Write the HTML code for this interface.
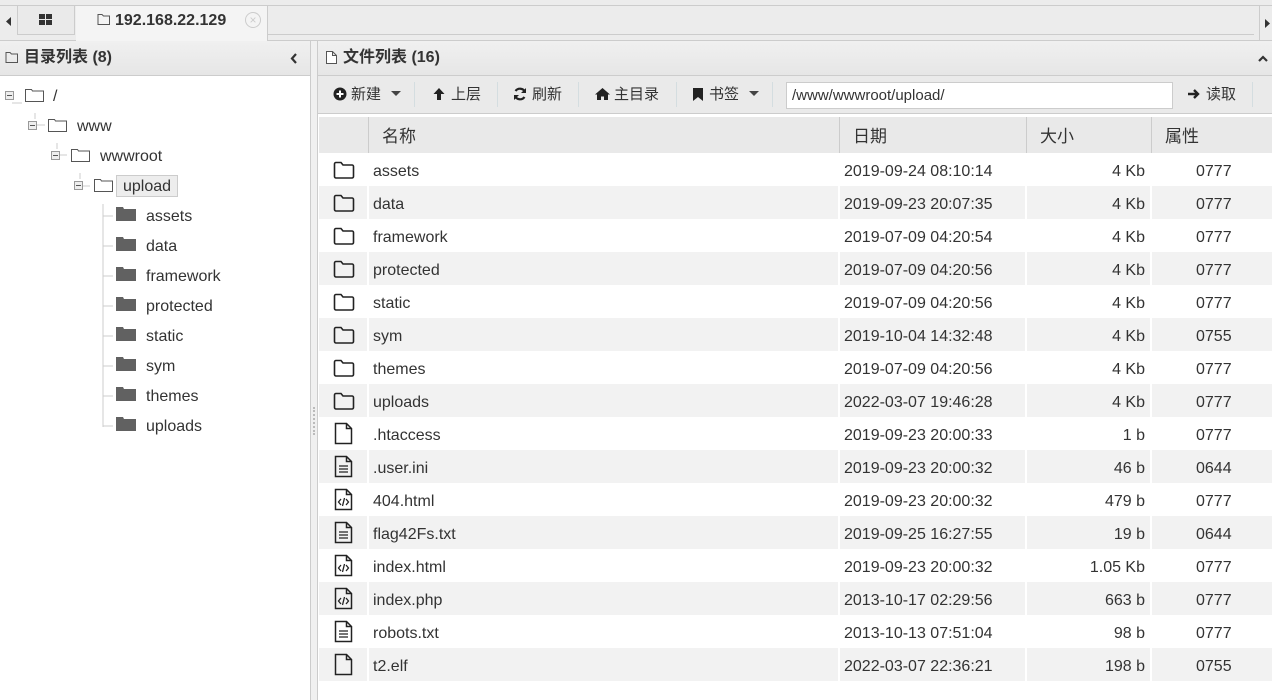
<!DOCTYPE html>
<html><head><meta charset="utf-8"><style>
*{margin:0;padding:0;box-sizing:border-box}
body{width:1272px;height:700px;overflow:hidden;background:#fff;font-family:"Liberation Sans","Noto Sans CJK SC",sans-serif;color:#333;position:relative;line-height:20px}
.abs{position:absolute}
.tabbar{left:0;top:0;width:1272px;height:41px;background:#ececec;border-bottom:1px solid #ccc}
.tabbar .line{left:0;top:5px;width:1272px;height:1px;background:#ccc}
.hdr{background:linear-gradient(#f0f0f0,#e6e6e6);border-bottom:1px solid #ccc;font-weight:bold;font-size:16px;color:#333}
.tree div{position:absolute;font-size:16px;color:#333;white-space:nowrap}
.row{position:absolute;left:319px;width:953px;height:33px;font-size:16px;color:#333}
.row span{position:absolute;top:9px}
.row.alt{background:#f2f2f2}
.sep{position:absolute;top:0;width:2px;height:33px;background:#fff}
.tb{font-size:15px;color:#333;top:85px}
.vs{width:1px;height:25px;background:#d4dde0;top:82px}
</style></head><body>
<div class="abs tabbar">
 <div class="abs line"></div>
 <div class="abs" style="left:0;top:6px;width:18px;height:29px;border-right:1px solid #ccc"></div>
 <svg class="abs" style="left:6px;top:17px" width="6" height="9"><path d="M5 0L0 4.5L5 9Z" fill="#333"/></svg>
 <div class="abs" style="left:18px;top:6px;width:57px;height:29px;background:#eaeaea;border-right:1px solid #ccc;border-bottom:1px solid #ccc"></div>
 <svg class="abs" style="left:39px;top:14px" width="14" height="12"><rect x="0" y="0" width="6" height="5" fill="#333"/><rect x="7" y="0" width="6" height="5" fill="#333"/><rect x="0" y="6" width="6" height="5" fill="#333"/><rect x="7" y="6" width="6" height="5" fill="#333"/></svg>
 <div class="abs" style="left:76px;top:6px;width:192px;height:35px;background:#f4f4f4;border-right:1px solid #ccc"></div>
 <svg class="abs" style="left:97px;top:13px" width="14" height="13"><path d="M1 1.5h4l1.5 1.5h6v8.5h-11.5z" fill="none" stroke="#555"/></svg>
 <div class="abs" style="left:115px;top:11px;font-size:16px;font-weight:bold;color:#333">192.168.22.129</div>
 <div class="abs" style="left:245px;top:12px;width:16px;height:16px;border-radius:50%;border:1px solid #ccc;color:#ccc;font-size:12px;line-height:14px;text-align:center">×</div>
 <div class="abs" style="left:268px;top:6px;width:986px;height:29px;border-bottom:1px solid #ccc"></div>
 <div class="abs" style="left:1259px;top:6px;width:1px;height:34px;background:#ccc"></div>
 <svg class="abs" style="left:1265px;top:19px" width="6" height="9"><path d="M0 0L5 4.5L0 9Z" fill="#333"/></svg>
</div>
<!-- left panel -->
<div class="abs hdr" style="left:0;top:41px;width:310px;height:35px"></div>
<svg class="abs" style="left:5px;top:51px" width="14" height="13"><path d="M1 1.5h4l1.5 1.5h6v8.5h-11.5z" fill="none" stroke="#555"/></svg>
<div class="abs" style="left:24px;top:48px;font-size:16px;font-weight:bold">目录列表 (8)</div>
<svg class="abs" style="left:290px;top:53px" width="8" height="11"><path d="M6 1L2 5.5L6 10" fill="none" stroke="#333" stroke-width="2.2"/></svg>
<div class="abs" style="left:310px;top:41px;width:8px;height:659px;background:#f0f0f0;border-left:1px solid #ccc;border-right:1px solid #ccc"></div>
<div class="abs" style="left:313px;top:407px;width:2px;height:28px;border-left:2px dotted #bbb"></div>
<div class="tree">
 <svg class="abs" style="left:0;top:80px" width="310" height="360">
  <g stroke="#ccc" fill="none">
   <line x1="12" y1="23" x2="22" y2="23"/><line x1="35" y1="33" x2="35" y2="39"/><line x1="35" y1="45" x2="45" y2="45"/>
   <line x1="57" y1="63" x2="57" y2="69"/><line x1="57" y1="75" x2="67" y2="75"/>
   <line x1="80" y1="93" x2="80" y2="99"/><line x1="80" y1="106" x2="90" y2="106"/>
   <line x1="103" y1="124" x2="103" y2="347"/>
  </g>
  <g stroke="#ccc">
   <line x1="103" y1="136" x2="113" y2="136"/><line x1="103" y1="166" x2="113" y2="166"/><line x1="103" y1="196" x2="113" y2="196"/><line x1="103" y1="226" x2="113" y2="226"/><line x1="103" y1="256" x2="113" y2="256"/><line x1="103" y1="286" x2="113" y2="286"/><line x1="103" y1="316" x2="113" y2="316"/><line x1="103" y1="346" x2="113" y2="346"/>
  </g>
  <g fill="#eee" stroke="#999"><rect x="5.5" y="11.5" width="8" height="8"/><rect x="28.5" y="41.5" width="8" height="8"/><rect x="51.5" y="71.5" width="8" height="8"/><rect x="74.5" y="101.5" width="8" height="8"/></g>
  <g stroke="#555"><line x1="7" y1="15.5" x2="12" y2="15.5"/><line x1="30" y1="45.5" x2="35" y2="45.5"/><line x1="53" y1="75.5" x2="58" y2="75.5"/><line x1="76" y1="105.5" x2="81" y2="105.5"/></g>
  <g fill="#fff" stroke="#555">
   <path d="M25.5 9.5h6l1 1.5h11v10.5h-18z"/><path d="M48.5 39.5h6l1 1.5h11v10.5h-18z"/><path d="M71.5 69.5h6l1 1.5h11v10.5h-18z"/><path d="M94.5 99.5h6l1 1.5h11v10.5h-18z"/>
  </g>
  <g fill="#616161">
   <path d="M116 127h7l1 2h12v12h-20z"/><path d="M116 157h7l1 2h12v12h-20z"/><path d="M116 187h7l1 2h12v12h-20z"/><path d="M116 217h7l1 2h12v12h-20z"/><path d="M116 247h7l1 2h12v12h-20z"/><path d="M116 277h7l1 2h12v12h-20z"/><path d="M116 307h7l1 2h12v12h-20z"/><path d="M116 337h7l1 2h12v12h-20z"/>
  </g>
 </svg>
 <div style="left:53px;top:87px">/</div>
 <div style="left:77px;top:117px">www</div>
 <div style="left:100px;top:147px">wwwroot</div>
 <div style="left:116px;top:175px;height:22px;padding:0 6px;line-height:21px;background:#ededed;border:1px solid #ccc">upload</div>
 <div style="left:146px;top:207px">assets</div>
 <div style="left:146px;top:237px">data</div>
 <div style="left:146px;top:267px">framework</div>
 <div style="left:146px;top:297px">protected</div>
 <div style="left:146px;top:327px">static</div>
 <div style="left:146px;top:357px">sym</div>
 <div style="left:146px;top:387px">themes</div>
 <div style="left:146px;top:417px">uploads</div>
</div>
<!-- right panel -->
<div class="abs hdr" style="left:318px;top:41px;width:954px;height:35px"></div>
<svg class="abs" style="left:325px;top:50px" width="13" height="15"><path d="M1.5 1.5h6l4 4v8h-10z M7.5 1.5v4h4" fill="#fff" stroke="#555"/></svg>
<div class="abs" style="left:343px;top:48px;font-size:16px;font-weight:bold">文件列表 (16)</div>
<svg class="abs" style="left:1258px;top:55px" width="10" height="7"><path d="M1 6L5 2L9 6" fill="none" stroke="#333" stroke-width="2.2"/></svg>
<div class="abs" style="left:318px;top:76px;width:954px;height:38px;background:#eaeaea;border-bottom:1px solid #ccc"></div>
<svg class="abs" style="left:333px;top:87px" width="14" height="14"><circle cx="7" cy="7" r="6.5" fill="#222"/><path d="M7 3.5v7M3.5 7h7" stroke="#fff" stroke-width="2"/></svg>
<div class="abs tb" style="left:351px">新建</div>
<svg class="abs" style="left:391px;top:91px" width="10" height="6"><path d="M0 0h10L5 5z" fill="#444"/></svg>
<div class="abs vs" style="left:414px"></div>
<svg class="abs" style="left:432px;top:87px" width="14" height="14"><path d="M7 1L1.5 7h3.5v6h4v-6h3.5z" fill="#222"/></svg>
<div class="abs tb" style="left:451px">上层</div>
<div class="abs vs" style="left:497px"></div>
<svg class="abs" style="left:513px;top:87px" width="14" height="14"><path d="M12 5A5.5 5.5 0 0 0 2.5 4M2 9a5.5 5.5 0 0 0 9.5 1" fill="none" stroke="#222" stroke-width="2.2"/><path d="M13 1v5h-5zM1 13V8h5z" fill="#222"/></svg>
<div class="abs tb" style="left:532px">刷新</div>
<div class="abs vs" style="left:578px"></div>
<svg class="abs" style="left:595px;top:88px" width="15" height="12"><path d="M7.5 0L0 6.5h2v5.5h4v-3.5h3v3.5h4v-5.5h2z" fill="#222"/></svg>
<div class="abs tb" style="left:614px">主目录</div>
<div class="abs vs" style="left:676px"></div>
<svg class="abs" style="left:692px;top:88px" width="12" height="13"><path d="M1 0h10v13l-5-4-5 4z" fill="#222"/></svg>
<div class="abs tb" style="left:709px">书签</div>
<svg class="abs" style="left:749px;top:91px" width="10" height="6"><path d="M0 0h10L5 5z" fill="#444"/></svg>
<div class="abs vs" style="left:772px"></div>
<div class="abs" style="left:786px;top:82px;width:387px;height:27px;background:#fff;border:1px solid #ccc;font-size:15px;padding:3px 5px;color:#333">/www/wwwroot/upload/</div>
<svg class="abs" style="left:1188px;top:88px" width="13" height="12"><path d="M0 6h9M6 2l4 4-4 4" fill="none" stroke="#222" stroke-width="2.4"/></svg>
<div class="abs tb" style="left:1206px">读取</div>
<div class="abs vs" style="left:1252px"></div>
<!-- table header -->
<div class="abs" style="left:319px;top:117px;width:953px;height:36px;background:#e9e9e9"></div>
<div class="abs" style="left:368px;top:117px;width:1px;height:36px;background:#ccc"></div>
<div class="abs" style="left:839px;top:117px;width:1px;height:36px;background:#ccc"></div>
<div class="abs" style="left:1026px;top:117px;width:1px;height:36px;background:#ccc"></div>
<div class="abs" style="left:1151px;top:117px;width:1px;height:36px;background:#ccc"></div>
<div class="abs" style="left:382px;top:127px;font-size:17px">名称</div>
<div class="abs" style="left:853px;top:127px;font-size:17px">日期</div>
<div class="abs" style="left:1040px;top:127px;font-size:17px">大小</div>
<div class="abs" style="left:1165px;top:127px;font-size:17px">属性</div>
<div id="rows"></div>
<script>
var F='<svg class="abs" style="left:14px;top:8px" width="22" height="18"><path d="M1.5 3a1.5 1.5 0 0 1 1.5-1.5h5l2 2.5h9a1.5 1.5 0 0 1 1.5 1.5v10a1.5 1.5 0 0 1-1.5 1.5h-16a1.5 1.5 0 0 1-1.5-1.5z" fill="none" stroke="#222" stroke-width="1.6"/></svg>';
function doc(inner){return '<svg class="abs" style="left:15px;top:5px" width="20" height="23"><path d="M1.5 1.5h11l5 5v15h-16z M12.5 1.5v5h5" fill="none" stroke="#222" stroke-width="1.5"/>'+inner+'</svg>';}
var B=doc(''),T=doc('<path d="M5 11h9M5 14h9M5 17h9" stroke="#222" stroke-width="1.3"/>'),H=doc('<path d="M7 11l-2.5 3 2.5 3M12 11l2.5 3-2.5 3M10.5 10l-2 8" fill="none" stroke="#222" stroke-width="1.3"/>');
var d=[[F,'assets','2019-09-24 08:10:14','4 Kb','0777'],[F,'data','2019-09-23 20:07:35','4 Kb','0777'],[F,'framework','2019-07-09 04:20:54','4 Kb','0777'],[F,'protected','2019-07-09 04:20:56','4 Kb','0777'],[F,'static','2019-07-09 04:20:56','4 Kb','0777'],[F,'sym','2019-10-04 14:32:48','4 Kb','0755'],[F,'themes','2019-07-09 04:20:56','4 Kb','0777'],[F,'uploads','2022-03-07 19:46:28','4 Kb','0777'],[B,'.htaccess','2019-09-23 20:00:33','1 b','0777'],[T,'.user.ini','2019-09-23 20:00:32','46 b','0644'],[H,'404.html','2019-09-23 20:00:32','479 b','0777'],[T,'flag42Fs.txt','2019-09-25 16:27:55','19 b','0644'],[H,'index.html','2019-09-23 20:00:32','1.05 Kb','0777'],[H,'index.php','2013-10-17 02:29:56','663 b','0777'],[T,'robots.txt','2013-10-13 07:51:04','98 b','0777'],[B,'t2.elf','2022-03-07 22:36:21','198 b','0755']];
var h='';d.forEach(function(r,i){h+='<div class="row'+(i%2?' alt':'')+'" style="top:'+(153+33*i)+'px">'+r[0]+'<div class="sep" style="left:48px"></div><div class="sep" style="left:519px"></div><div class="sep" style="left:706px"></div><div class="sep" style="left:831px"></div><span style="left:54px">'+r[1]+'</span><span style="left:525px">'+r[2]+'</span><span style="right:127px">'+r[3]+'</span><span style="left:877px">'+r[4]+'</span></div>';});
document.getElementById('rows').innerHTML=h;
</script>
</body></html>
